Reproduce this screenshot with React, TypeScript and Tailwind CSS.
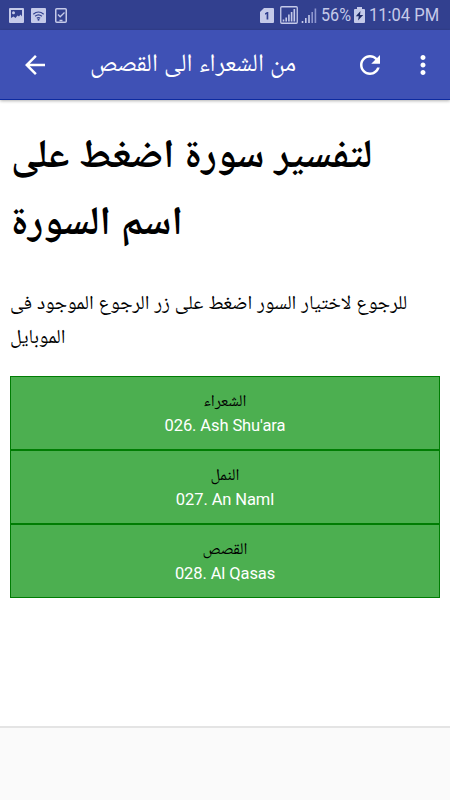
import type { ReactNode } from "react";

interface Surah {
  number: string;
  arabic: string;
  english: string;
}

const surahs: Surah[] = [
  { number: "026", arabic: "الشعراء", english: "Ash Shu'ara" },
  { number: "027", arabic: "النمل", english: "An Naml" },
  { number: "028", arabic: "القصص", english: "Al Qasas" },
];

function SignalBars({ boxed }: { boxed?: boolean }) {
  return boxed ? (
    <svg width="18" height="18" viewBox="0 0 18 18" fill="none">
      <rect x="0.75" y="0.75" width="16.5" height="16.5" rx="1" stroke="#c5cae9" strokeWidth="1.3" />
      <path d="M3.5 15.500v-2M6.2 15.500v-4M8.9 15.500V8.5M11.6 15.500V6M14.3 15.500V3" stroke="#c5cae9" strokeWidth="1.6" />
    </svg>
  ) : (
    <svg width="16" height="18" viewBox="0 0 16 18" fill="none">
      <path d="M1.5 17v-2M4.8 17v-5M8 17V9" stroke="#c5cae9" strokeWidth="1.6" />
      <path d="M11.2 17V6M14.4 17V2.5" stroke="#8d96cf" strokeWidth="1.6" />
    </svg>
  );
}

function StatusBar() {
  return (
    <div className="flex h-[30px] items-center bg-[#32408f] pr-[10px] pl-[9px] text-[#c5cae9]">
      <div className="flex items-center">
        <svg width="15" height="15" viewBox="0 0 15 15">
          <rect width="15" height="15" rx="1" fill="#c5cae9" />
          <path d="M2 2h11v6.500L11.500 6.500 10 8.500 8.500 7.500 6.500 10 4.500 8.500 2 10z" fill="#32408f" />
          <circle cx="4.500" cy="4.800" r="1.500" fill="#c5cae9" />
        </svg>
        <svg className="ml-[7px]" width="15" height="15" viewBox="0 0 15 15" fill="none">
          <rect width="15" height="15" rx="1" fill="#c5cae9" />
          <path d="M2.300 6.200q5.200-4.400 10.400 0M4.100 8.300q3.400-2.800 6.800 0M5.800 10.200q1.700-1.300 3.400 0" stroke="#32408f" strokeWidth="1.200" />
          <circle cx="7.500" cy="11.800" r="1" fill="#32408f" />
        </svg>
        <svg className="ml-[9px]" width="12" height="15" viewBox="0 0 12 15" fill="none">
          <rect x="0.750" y="0.750" width="10.500" height="13.500" rx="1" stroke="#c5cae9" strokeWidth="1.500" />
          <path d="M3 6.500l2.200 2.300 4.300-4.300M4.500 12.500h3" stroke="#c5cae9" strokeWidth="1.300" />
        </svg>
      </div>
      <div className="ml-auto flex items-center">
        <svg width="14" height="15" viewBox="0 0 14 15">
          <path d="M4 0h9a1 1 0 0 1 1 1v13a1 1 0 0 1-1 1H1a1 1 0 0 1-1-1V4z" fill="#c5cae9" />
          <path d="M5 5.300l2-1.300h1.300v7.500H6.600V6L5 6.700z" fill="#32408f" />
        </svg>
        <span className="ml-[6px]"><SignalBars boxed /></span>
        <span className="ml-[3px]"><SignalBars /></span>
        <span className="ml-[4px] w-[31px] origin-left scale-x-[0.85] text-[19px] leading-[30px] whitespace-nowrap">56%</span>
        <svg className="ml-[2px]" width="11" height="16" viewBox="0 0 11 16">
          <path d="M3 0h5v2h2a1 1 0 0 1 1 1v12a1 1 0 0 1-1 1H1a1 1 0 0 1-1-1V3a1 1 0 0 1 1-1h2z" fill="#c5cae9" />
          <path d="M6.500 4L1.800 9.300h3L4 13.500 9.200 8H6z" fill="#202b66" />
        </svg>
        <span className="ml-[4px] w-[71px] origin-left scale-x-[0.87] text-[19px] leading-[30px] whitespace-nowrap">11:04 PM</span>
      </div>
    </div>
  );
}

function Icon({ children, className }: { children: ReactNode; className: string }) {
  return (
    <svg width="30" height="30" viewBox="0 0 24 24" fill="white" className={className}>
      {children}
    </svg>
  );
}

function AppBar() {
  return (
    <header className="relative flex h-[70px] items-center border-b border-[#0d2aa0] bg-[#3f51b5] pl-5 text-white shadow-[0_1px_3px_rgba(0,0,0,0.3)]">
      <Icon className="shrink-0">
        <path d="M20 11H7.830l5.590-5.590L12 4l-8 8 8 8 1.410-1.410L7.830 13H20v-2z" />
      </Icon>
      <h1 className="ml-[40px] w-[206px] pb-[3px] text-[25px] leading-[34px] whitespace-nowrap">من الشعراء الى القصص</h1>
      <Icon className="ml-[59px] shrink-0">
        <path d="M17.650 6.350C16.200 4.900 14.210 4 12 4c-4.420 0-7.990 3.580-7.990 8s3.570 8 7.990 8c3.730 0 6.840-2.550 7.730-6h-2.080c-.82 2.330-3.040 4-5.650 4-3.310 0-6-2.690-6-6s2.690-6 6-6c1.660 0 3.140.69 4.220 1.780L13 11h7V4l-2.350 2.350z" />
      </Icon>
      <Icon className="ml-[22.500px] shrink-0">
        <path d="M12 8c1.100 0 2-.9 2-2s-.9-2-2-2-2 .9-2 2 .9 2 2 2zm0 2c-1.100 0-2 .9-2 2s.9 2 2 2 2-.9 2-2-.9-2-2-2zm0 6c-1.100 0-2 .9-2 2s.9 2 2 2 2-.9 2-2-.9-2-2-2z" />
      </Icon>
    </header>
  );
}

export default function App() {
  return (
    <div className="flex h-[800px] w-[450px] flex-col overflow-hidden bg-white font-['Roboto','Noto_Naskh_Arabic','DejaVu_Sans',sans-serif]">
      <StatusBar />
      <AppBar />

      <main className="flex-1 px-[10px] pt-[20px] text-black">
        <h2 className="pl-px text-[40.2px] leading-[67px] font-bold whitespace-nowrap">
          لتفسير سورة اضغط على
          <br />
          اسم السورة
        </h2>
        <p className="mt-[32px] text-[19.9px] leading-[34px] whitespace-nowrap">
          للرجوع لاختيار السور اضغط على زر الرجوع الموجود فى
          <br />
          الموبايل
        </p>

        <div className="mt-[22px]">
          {surahs.map((surah) => (
            <button
              key={surah.number}
              className="flex h-[74px] w-full flex-col items-center border border-[#007d03] bg-[#4caf50] pt-[12px]"
            >
              <span className="text-[16.5px] leading-[24px] text-black">{surah.arabic}</span>
              <span className="mt-px text-[16.5px] leading-[24px] tracking-[-0.1px] text-white">
                {surah.number}. {surah.english}
              </span>
            </button>
          ))}
        </div>
      </main>

      {/* Ad banner */}
      <footer className="h-[74px] border-t-2 border-[#e4e4e4] bg-[#fafafa]" />
    </div>
  );
}
